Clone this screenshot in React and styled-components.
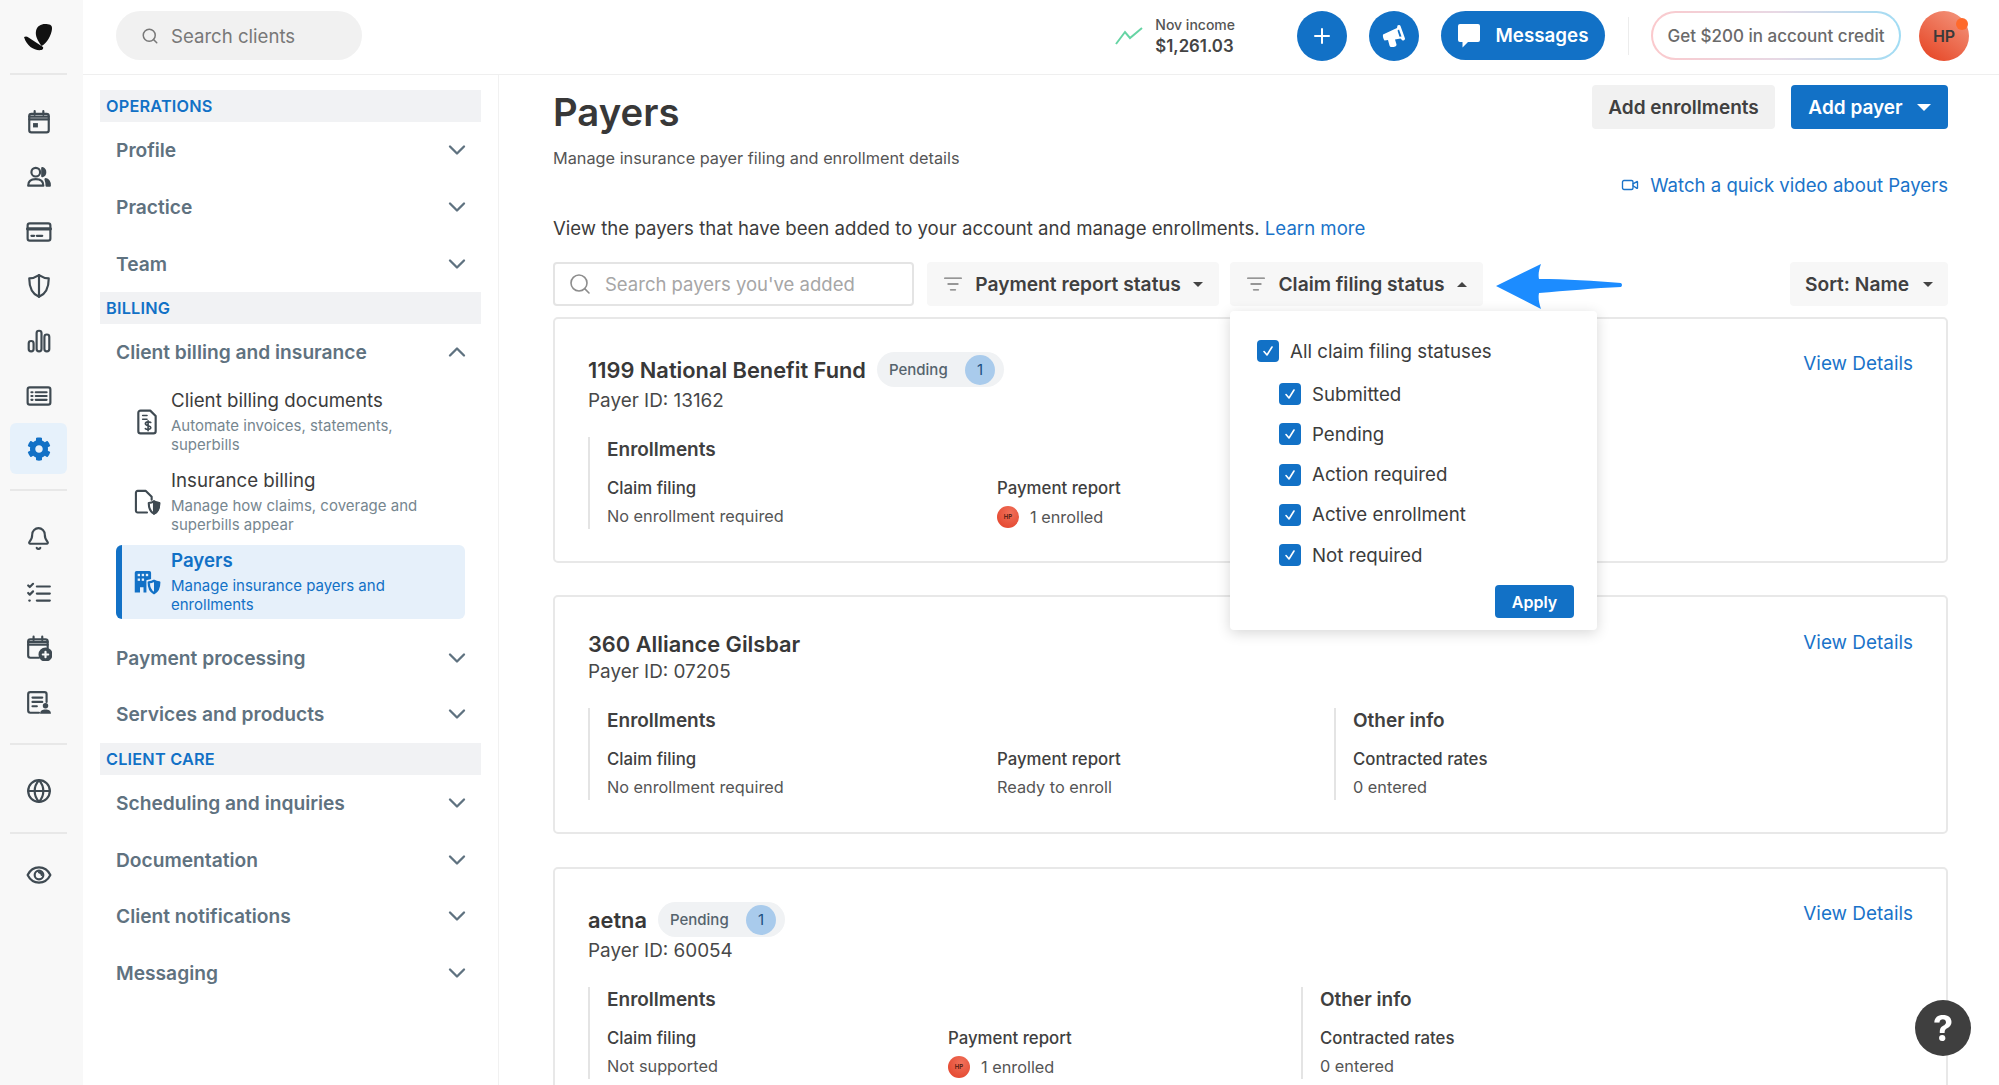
import React from "react";
import styled, { createGlobalStyle } from "styled-components";
import { ChevronDown, ChevronUp, Search, Plus, Globe, Bell, Video, ListFilter } from "lucide-react";
import { FaCog } from "react-icons/fa";

const GlobalStyle = createGlobalStyle`
  html, body {
    margin: 0;
    padding: 0;
    background: #fff;
    font-family: "Inter", "Liberation Sans", sans-serif;
    color: #3c3c3c;
  }
  * {
    box-sizing: border-box;
  }
`;

const BLUE = "#1271c6";

const Page = styled.div`
  display: flex;
  width: 100%;
  height: 100vh;
  overflow: hidden;
`;

const Rail = styled.nav`
  width: 83px;
  flex-shrink: 0;
  background: #f8f8f8;
  display: flex;
  flex-direction: column;
  align-items: flex-start;
  padding-left: 10px;
  color: #3f4a52;
`;

const LogoBox = styled.div`
  height: 75px;
  width: 57px;
  display: flex;
  align-items: center;
  justify-content: center;
  border-bottom: 2px solid #e8e8e8;
`;

const RailGroup = styled.div`
  display: flex;
  flex-direction: column;
  align-items: center;
  padding: ${(p) => p.$pad || "20px 0 15px"};
  width: 57px;
  border-bottom: ${(p) => (p.$last ? "none" : "2px solid #e8e8e8")};
`;

const RailIcon = styled.div`
  width: 57px;
  height: ${(p) => p.$h || 54.7}px;
  display: flex;
  align-items: center;
  justify-content: center;
  border-radius: 6px;
  background: ${(p) => (p.$active ? "#e6f1fb" : "transparent")};
  color: ${(p) => (p.$active ? BLUE : "inherit")};
`;

const Body = styled.div`
  flex: 1;
  min-width: 0;
  display: flex;
  flex-direction: column;
`;

const TopBar = styled.header`
  height: 75px;
  flex-shrink: 0;
  border-bottom: 1px solid #efefef;
  display: flex;
  align-items: center;
  padding: 0 30px 3px 33px;
`;

const ClientSearch = styled.div`
  width: 246px;
  height: 49px;
  border-radius: 25px;
  background: #f1f1f1;
  display: flex;
  align-items: center;
  padding-left: 25px;
  gap: 12px;
  font-size: 18.6px;
  color: #787878;
`;

const Income = styled.div`
  margin-left: auto;
  display: flex;
  align-items: center;
  gap: 12px;
  margin-right: 62px;
`;

const IncomeText = styled.div`
  display: flex;
  flex-direction: column;
  gap: 3px;
`;

const IncomeLabel = styled.span`
  font-size: 14px;
  font-weight: 500;
  color: #555;
`;

const IncomeValue = styled.span`
  font-size: 16.8px;
  font-weight: 600;
  color: #444;
`;

const RoundButton = styled.div`
  width: 50px;
  height: 50px;
  border-radius: 50%;
  background: ${BLUE};
  color: #fff;
  display: flex;
  align-items: center;
  justify-content: center;
  margin-right: 22px;
`;

const MessagesButton = styled.div`
  width: 164px;
  height: 49px;
  border-radius: 25px;
  background: ${BLUE};
  color: #fff;
  display: flex;
  align-items: center;
  justify-content: center;
  gap: 14px;
  font-size: 18.8px;
  font-weight: 600;
`;

const BarDivider = styled.div`
  width: 1px;
  height: 38px;
  background: #ececec;
  margin: 0 22px 0 23px;
`;

const CreditPill = styled.div`
  width: 250px;
  height: 49px;
  border-radius: 25px;
  border: 2px solid transparent;
  background: linear-gradient(#fff, #fff) padding-box,
    linear-gradient(90deg, #fbc9cc, #e8d8e4 50%, #a0dcf4) border-box;
  display: flex;
  align-items: center;
  justify-content: center;
  font-size: 17px;
  font-weight: 500;
  color: #6a6a6a;
`;

const Avatar = styled.div`
  position: relative;
  width: 50px;
  height: 50px;
  margin-left: 18px;
  border-radius: 50%;
  background: linear-gradient(215deg, #f49a82, #e5401f);
  display: flex;
  align-items: center;
  justify-content: center;
  font-size: 16px;
  font-weight: 600;
  color: #3a3a3a;
`;

const AvatarDot = styled.span`
  position: absolute;
  top: 7px;
  right: 1px;
  width: 12px;
  height: 12px;
  border-radius: 50%;
  background: #ff6a2b;
`;

const Columns = styled.div`
  flex: 1;
  min-height: 0;
  display: flex;
`;

const Sidebar = styled.aside`
  width: 416px;
  flex-shrink: 0;
  border-right: 1px solid #f1f1f1;
  padding: 15px 17px 0;
`;

const Band = styled.div`
  height: 32px;
  background: #f1f2f4;
  color: ${BLUE};
  font-size: 16.3px;
  font-weight: 600;
  letter-spacing: 0.2px;
  display: flex;
  align-items: center;
  padding-left: 6px;
`;

const NavRow = styled.div`
  height: 56.7px;
  display: flex;
  align-items: center;
  justify-content: space-between;
  padding: 0 10px 0 16px;
  font-size: 19.2px;
  font-weight: 600;
  color: #5f7280;
`;

const SubNav = styled.div`
  display: flex;
  flex-direction: column;
  gap: 6px;
  padding: 4px 16px 10.5px;
`;

const SubItem = styled.div`
  height: 74px;
  display: grid;
  grid-template-columns: 49px 1fr;
  align-items: center;
  padding-right: 14px;
  border-left: 6px solid ${(p) => (p.$active ? BLUE : "transparent")};
  border-radius: 6px;
  background: ${(p) => (p.$active ? "#e6f0fa" : "transparent")};
  color: ${(p) => (p.$active ? BLUE : "#3f4a52")};
`;

const SubIcon = styled.div`
  display: flex;
  justify-content: center;
`;

const SubTitle = styled.div`
  font-size: 18.7px;
  font-weight: ${(p) => (p.$active ? 600 : 400)};
  line-height: 24px;
  color: ${(p) => (p.$active ? BLUE : "#3c3c3c")};
`;

const SubText = styled.div`
  font-size: 15px;
  line-height: 18.5px;
  margin-top: 4px;
  color: ${(p) => (p.$active ? BLUE : "#76868f")};
`;

const Main = styled.main`
  flex: 1;
  min-width: 0;
  padding: 10px 51px 0 54px;
  overflow: hidden;
`;

const Header = styled.div`
  display: flex;
  justify-content: space-between;
  align-items: flex-start;
`;

const Title = styled.h1`
  margin: 0;
  font-size: 38.3px;
  line-height: 54px;
  font-weight: 600;
  color: #383838;
`;

const Subtitle = styled.div`
  margin-top: 9px;
  font-size: 16.3px;
  line-height: 20px;
  color: #555;
`;

const Actions = styled.div`
  display: flex;
  gap: 16px;
`;

const GreyButton = styled.div`
  height: 44px;
  width: 183px;
  border-radius: 4px;
  background: #f1f1f1;
  display: flex;
  align-items: center;
  justify-content: center;
  font-size: 19px;
  font-weight: 600;
  color: #404040;
`;

const BlueButton = styled.div`
  height: 44px;
  width: 157px;
  border-radius: 4px;
  background: ${BLUE};
  display: flex;
  align-items: center;
  justify-content: center;
  gap: 14px;
  font-size: 19px;
  font-weight: 600;
  color: #fff;
`;

const Caret = styled.span`
  width: 0;
  height: 0;
  border-left: ${(p) => p.$size || 5}px solid transparent;
  border-right: ${(p) => p.$size || 5}px solid transparent;
  border-top: ${(p) => (p.$up ? "0" : `${p.$size || 5}px solid ${p.$color || "#444"}`)};
  border-bottom: ${(p) => (p.$up ? `${p.$size || 5}px solid ${p.$color || "#444"}` : "0")};
`;

const VideoLink = styled.div`
  margin-top: 6px;
  display: flex;
  justify-content: flex-end;
  align-items: center;
  gap: 11px;
  font-size: 18.6px;
  line-height: 22px;
  color: #1a73c9;
`;

const Intro = styled.div`
  margin-top: 20px;
  font-size: 18.6px;
  line-height: 24px;
  color: #3c3c3c;
`;

const LearnMore = styled.span`
  color: #1a73c9;
`;

const FilterRow = styled.div`
  margin-top: 22px;
  height: 44px;
  display: flex;
  align-items: center;
`;

const PayerSearch = styled.div`
  width: 361px;
  height: 44px;
  border: 2px solid #e4e4e4;
  border-radius: 4px;
  display: flex;
  align-items: center;
  gap: 11px;
  padding-left: 13px;
  margin-right: 13px;
  color: #8d8d8d;
`;

const PayerInput = styled.input`
  border: 0;
  outline: 0;
  flex: 1;
  min-width: 0;
  font-family: inherit;
  font-size: 18.5px;
  background: transparent;
  &::placeholder {
    color: #a6a6a6;
  }
`;

const FilterWrap = styled.div`
  position: relative;
  margin-right: ${(p) => p.$mr || 0}px;
`;

const FilterButton = styled.div`
  height: 44px;
  width: ${(p) => p.$w}px;
  background: #f7f7f7;
  border-radius: 4px;
  display: flex;
  align-items: center;
  justify-content: center;
  gap: ${(p) => p.$gap || 12}px;
  font-size: 19.2px;
  font-weight: 600;
  color: #404040;
`;

const Dropdown = styled.div`
  position: absolute;
  z-index: 5;
  top: calc(100% + 5px);
  left: 0;
  width: 367px;
  height: 319px;
  background: #fff;
  border-radius: 4px;
  box-shadow: 0 3px 14px rgba(0, 0, 0, 0.16);
  padding: 26px 23px 0 27px;
`;

const CheckRow = styled.div`
  display: flex;
  align-items: center;
  gap: 11px;
  height: 28px;
  margin-left: ${(p) => (p.$nested ? 22 : 0)}px;
  margin-bottom: ${(p) => p.$mb || 12.3}px;
  font-size: 18.7px;
  color: #3c3c3c;
`;

const CheckBox = styled.span`
  width: 22px;
  height: 22px;
  border-radius: 4px;
  background: ${BLUE};
  display: flex;
  align-items: center;
  justify-content: center;
  flex-shrink: 0;
`;

const ApplyRow = styled.div`
  display: flex;
  justify-content: flex-end;
  margin-top: 16px;
`;

const ApplyButton = styled.div`
  width: 79px;
  height: 33px;
  border-radius: 4px;
  background: ${BLUE};
  color: #fff;
  font-size: 16px;
  font-weight: 600;
  display: flex;
  align-items: center;
  justify-content: center;
`;

const ArrowMark = styled.svg`
  margin: 3px 0 0 12px;
  flex-shrink: 0;
`;

const SortWrap = styled.div`
  margin-left: auto;
`;

const Card = styled.section`
  position: relative;
  margin-top: ${(p) => p.$mt}px;
  height: ${(p) => p.$h}px;
  border: 2px solid #e8e8e8;
  border-radius: 5px;
  padding: 33px 0 0 33px;
`;

const NameRow = styled.div`
  display: flex;
  align-items: center;
  gap: 11px;
  min-height: ${(p) => (p.$pill ? 35 : 28)}px;
`;

const PayerName = styled.div`
  font-size: 21.8px;
  font-weight: 600;
  color: #383838;
`;

const StatusPill = styled.div`
  height: 35px;
  width: ${(p) => p.$w}px;
  border-radius: 18px;
  background: #f0f2f4;
  display: flex;
  align-items: center;
  justify-content: space-between;
  padding: 0 9px 0 12px;
  font-size: 15px;
  font-weight: 500;
  color: #55636d;
`;

const StatusCount = styled.span`
  width: 30px;
  height: 30px;
  border-radius: 50%;
  background: #a9cbec;
  color: #1d4f80;
  font-weight: 400;
  display: flex;
  align-items: center;
  justify-content: center;
`;

const PayerId = styled.div`
  margin-top: 2px;
  font-size: 18.9px;
  line-height: 24px;
  color: #484848;
`;

const ViewDetails = styled.div`
  position: absolute;
  top: ${(p) => p.$top}px;
  right: 33px;
  font-size: 18.9px;
  line-height: 24px;
  color: #1a73c9;
`;

const InfoRow = styled.div`
  margin-top: 24px;
  display: flex;
`;

const InfoSection = styled.div`
  width: ${(p) => (p.$w ? `${p.$w}px` : "auto")};
  height: 92px;
  border-left: 2px solid #e4e4e4;
  padding-left: 17px;
`;

const InfoHeading = styled.div`
  font-size: 19px;
  line-height: 26px;
  font-weight: 600;
  color: #404040;
  margin-bottom: 15px;
`;

const InfoFields = styled.div`
  display: flex;
`;

const InfoField = styled.div`
  width: ${(p) => (p.$w ? `${p.$w}px` : "auto")};
`;

const FieldLabel = styled.div`
  font-size: 16.8px;
  line-height: 20px;
  font-weight: 500;
  color: #404040;
`;

const FieldValue = styled.div`
  margin-top: 8px;
  display: flex;
  align-items: center;
  gap: 11px;
  font-size: 16.3px;
  line-height: 20px;
  color: #555;
`;

const MiniAvatar = styled.span`
  width: 22px;
  height: 22px;
  border-radius: 50%;
  background: radial-gradient(circle at 60% 30%, #f0705a, #e23f26);
  color: #4a1a10;
  font-size: 6px;
  font-weight: 600;
  display: flex;
  align-items: center;
  justify-content: center;
`;

const HelpButton = styled.div`
  position: fixed;
  right: 28px;
  bottom: 29px;
  width: 56px;
  height: 56px;
  border-radius: 50%;
  background: #3f3f3f;
  color: #fff;
  font-size: 36px;
  font-weight: 700;
  display: flex;
  align-items: center;
  justify-content: center;
`;

// rail + sidebar drawings, all on a 24 grid
const Ico = ({ children, size = 26, sw = 2, fill = "none" }) => (
  <svg width={size} height={size} viewBox="0 0 24 24" fill={fill} stroke="currentColor" strokeWidth={sw} strokeLinecap="round" strokeLinejoin="round">
    {children}
  </svg>
);

const Logo = () => (
  <svg width="29" height="28" viewBox="0 0 29 28" fill="#111">
    <path d="M17.600 23C14 18 11 13 12 8C13 3 17 1 21 1C25 1 28.500 1.500 28 6C27.500 12 23 20 17.600 23Z" />
    <path d="M0 14C2 13 3 13.500 4.500 14.500L19 24C19.500 25 19 26.500 17.500 27C11 28 3 24 0 14Z" />
  </svg>
);

const CalendarIcon = () => (
  <Ico>
    <rect x="3" y="4.500" width="18" height="17" rx="2" />
    <path d="M3 9.500h18M3 7h18M8 2v3M16 2v3" />
    <rect x="6.500" y="13" width="4.500" height="4" fill="currentColor" stroke="none" />
  </Ico>
);

const PeopleIcon = () => (
  <Ico>
    <circle cx="9" cy="7.500" r="4" />
    <path d="M2 20c0-4 3-6 7-6s7 2 7 6z" />
    <path d="M15 3.700a4 4 0 0 1 0 7.600z" fill="currentColor" />
    <path d="M18 14c2.500.5 4 2.500 4 6h-3c0-2.500-.5-4.500-1-6z" fill="currentColor" />
  </Ico>
);

const CardIcon = () => (
  <Ico>
    <rect x="1.500" y="4" width="21" height="16" rx="2" />
    <path d="M1.500 9h21" strokeWidth="3" />
    <path d="M5 15.500h2.500M10 15.500h5" />
  </Ico>
);

const ShieldIcon = () => (
  <Ico>
    <path d="M12 2c3 2 6 3 9 3 0 8-2 14-9 17C5 19 3 13 3 5c3 0 6-1 9-3z" />
    <path d="M12 2v20" />
  </Ico>
);

const BarsIcon = () => (
  <Ico>
    <rect x="2.500" y="12" width="4.500" height="9.500" rx="2.200" />
    <rect x="9.800" y="2.500" width="4.500" height="19" rx="2.200" />
    <rect x="17" y="6" width="4.500" height="15.500" rx="2.200" />
  </Ico>
);

const ListIcon = () => (
  <Ico>
    <rect x="1.500" y="4" width="21" height="16" rx="2" />
    <path d="M5 8.500h1M5 12h1M5 15.500h1M9 8.500h10M9 12h10M9 15.500h10" />
  </Ico>
);

const TasksIcon = () => (
  <Ico>
    <path d="M2 5l1.500 1.500L6.500 3.500M2 12l1.500 1.500L6.500 10.500M3 19h.5M10 6h12M10 12.500h12M10 19h12" />
  </Ico>
);

const CalendarPlusIcon = () => (
  <Ico>
    <path d="M12 21H4a2 2 0 0 1-2-2V6a2 2 0 0 1 2-2h14a2 2 0 0 1 2 2v6" />
    <path d="M2 9h18M2 6.500h18M7 1.500v3M15 1.500v3" />
    <circle cx="18" cy="18" r="5.500" fill="currentColor" />
    <path d="M18 15.500v5M15.500 18h5" stroke="#f8f8f8" />
  </Ico>
);

const ReportIcon = () => (
  <Ico>
    <path d="M12 21H4a2 2 0 0 1-2-2V4a2 2 0 0 1 2-2h13a2 2 0 0 1 2 2v7" />
    <path d="M6 7h9M6 11h9M6 15h4" />
    <circle cx="18" cy="14.500" r="2.500" fill="currentColor" stroke="none" />
    <path d="M13 22c0-3 2-4 5-4s5 1 5 4z" fill="currentColor" stroke="none" />
  </Ico>
);

const EyeIcon = () => (
  <Ico>
    <path d="M1.500 12C4 7 8 5 12 5s8 2 10.500 7C20 17 16 19 12 19s-8-2-10.500-7z" />
    <circle cx="12" cy="12" r="4" />
    <path d="M12 9.500a2.500 2.500 0 0 1 2.500 2.500" />
  </Ico>
);

const DocDollarIcon = () => (
  <svg width="26" height="28" viewBox="0 0 24 24" fill="none" stroke="currentColor" strokeWidth="2" strokeLinecap="round" strokeLinejoin="round">
    <path d="M6 1.500h9l5 5v14a2 2 0 0 1-2 2H6a2 2 0 0 1-2-2v-17a2 2 0 0 1 2-2z" />
    <path d="M8 6h4M8 9.500h4" strokeWidth="1.500" />
    <path d="M15.500 12.500c-1-1-5-1-5 1.200s5 1.300 5 3.400-4 2-5 1M13 11v9" strokeWidth="1.500" />
  </svg>
);

const DocShieldIcon = () => (
  <Ico size={28} sw={1.800}>
    <path d="M12 21H4a1.500 1.500 0 0 1-1.500-1.500V4A1.500 1.500 0 0 1 4 2.500h7l5 5V10" />
    <path d="M18 11.500c1.500 1 3 1.300 4.500 1.300 0 4.500-1.300 7.700-4.500 9.200-3.200-1.500-4.500-4.700-4.500-9.200 1.500 0 3-.3 4.500-1.300z" />
    <path d="M18 11.500V22h0c3.200-1.500 4.500-4.700 4.500-9.200-1.500 0-3-.3-4.500-1.300z" fill="currentColor" />
  </Ico>
);

const BuildingShieldIcon = () => (
  <svg width="28" height="28" viewBox="0 0 24 24">
    <path fill="currentColor" d="M3 2.500h11A1.500 1.500 0 0 1 15.500 4v5.500c-2 .6-3.500 1-4 1V21H9v-4.500H6V21H1.500V4A1.500 1.500 0 0 1 3 2.500z" />
    <g fill="#e6f0fa">
      <rect x="4" y="5" width="2" height="2" />
      <rect x="7.500" y="5" width="2" height="2" />
      <rect x="11" y="5" width="2" height="2" />
      <rect x="4" y="9" width="2" height="2" />
      <rect x="7.500" y="9" width="2" height="2" />
    </g>
    <path fill="none" stroke="currentColor" strokeWidth="2" strokeLinejoin="round" d="M18 11c1.500 1 3 1.300 4.500 1.300 0 4.500-1.300 7.700-4.500 9.200-3.200-1.500-4.500-4.700-4.500-9.200 1.500 0 3-.3 4.500-1.300z" />
    <path fill="currentColor" d="M18 11v10.500c3.200-1.500 4.500-4.700 4.500-9.200-1.500 0-3-.3-4.500-1.300z" />
  </svg>
);

const HornIcon = () => (
  <svg width="24" height="24" viewBox="0 0 24 24" fill="#fff" fillRule="evenodd">
    <path d="M1 10.500L15 4L15.500 1.500C16.500 .5 18 1 18.500 2L23 14.500C23 16 22 16.500 20.500 16.500L18.500 14.500L13 15.500L14.500 20.500C14.500 22 13.500 22.500 12 23L9.500 23C8.500 23 8 22.500 7.500 21.500L6 16L2.500 16.500C1.500 15 .5 12.500 1 10.500ZM17 5.500L19.500 12.500L17.500 12.800L15.500 6.500Z" />
  </svg>
);

const BubbleIcon = () => (
  <svg width="24" height="25" viewBox="0 0 24 25" fill="#fff">
    <path d="M3 1h18a2 2 0 0 1 2 2v14a2 2 0 0 1-2 2H11l-5.500 5.500L5.500 19H3a2 2 0 0 1-2-2V3a2 2 0 0 1 2-2z" />
  </svg>
);

const TrendIcon = () => (
  <svg width="28" height="18" viewBox="0 0 28 18" fill="none" stroke="#66d4a4" strokeWidth="2">
    <path d="M1 17L10 5L15 11L27 1" />
  </svg>
);

const TickIcon = () => (
  <svg width="14" height="14" viewBox="0 0 14 14" fill="none" stroke="#fff" strokeWidth="1.600" strokeLinecap="round" strokeLinejoin="round">
    <path d="M3 7.500L6 11L11 3" />
  </svg>
);

const Chevron = () => <ChevronDown size={28} strokeWidth={2} />;

const operations = ["Profile", "Practice", "Team"];
const billingAfter = ["Payment processing", "Services and products"];
const clientCare = ["Scheduling and inquiries", "Documentation", "Client notifications", "Messaging"];
const claimStatuses = ["Submitted", "Pending", "Action required", "Active enrollment", "Not required"];

function NavItem({ label, open }) {
  return (
    <NavRow>
      {label}
      {open ? <ChevronUp size={28} strokeWidth={2} /> : <Chevron />}
    </NavRow>
  );
}

function Payer({ name, id, pillWidth, detailsTop, mt, h, enrollWidth, claim, reportWidth, report, enrolled, other }) {
  return (
    <Card $mt={mt} $h={h}>
      <NameRow $pill={!!pillWidth}>
        <PayerName>{name}</PayerName>
        {pillWidth && (
          <StatusPill $w={pillWidth}>
            Pending
            <StatusCount>1</StatusCount>
          </StatusPill>
        )}
      </NameRow>
      <PayerId>Payer ID: {id}</PayerId>
      <ViewDetails $top={detailsTop}>View Details</ViewDetails>
      <InfoRow>
        <InfoSection $w={enrollWidth}>
          <InfoHeading>Enrollments</InfoHeading>
          <InfoFields>
            <InfoField $w={reportWidth}>
              <FieldLabel>Claim filing</FieldLabel>
              <FieldValue>{claim}</FieldValue>
            </InfoField>
            <InfoField>
              <FieldLabel>Payment report</FieldLabel>
              <FieldValue>
                {enrolled && <MiniAvatar>HP</MiniAvatar>}
                {report}
              </FieldValue>
            </InfoField>
          </InfoFields>
        </InfoSection>
        {other && (
          <InfoSection>
            <InfoHeading>Other info</InfoHeading>
            <FieldLabel>Contracted rates</FieldLabel>
            <FieldValue>0 entered</FieldValue>
          </InfoSection>
        )}
      </InfoRow>
    </Card>
  );
}

export default function App() {
  return (
    <Page>
      <GlobalStyle />
      <Rail>
        <LogoBox>
          <Logo />
        </LogoBox>
        <RailGroup>
          <RailIcon><CalendarIcon /></RailIcon>
          <RailIcon><PeopleIcon /></RailIcon>
          <RailIcon><CardIcon /></RailIcon>
          <RailIcon><ShieldIcon /></RailIcon>
          <RailIcon><BarsIcon /></RailIcon>
          <RailIcon><ListIcon /></RailIcon>
          <RailIcon $active $h={51}><FaCog size={24} /></RailIcon>
        </RailGroup>
        <RailGroup $pad="20px 0 13px">
          <RailIcon><Bell size={25} strokeWidth={2} /></RailIcon>
          <RailIcon><TasksIcon /></RailIcon>
          <RailIcon><CalendarPlusIcon /></RailIcon>
          <RailIcon><ReportIcon /></RailIcon>
        </RailGroup>
        <RailGroup $pad="20px 0 15px">
          <RailIcon $h={52}><Globe size={26} strokeWidth={2} /></RailIcon>
        </RailGroup>
        <RailGroup $pad="15px 0" $last>
          <RailIcon $h={52}><EyeIcon /></RailIcon>
        </RailGroup>
      </Rail>

      <Body>
        <TopBar>
          <ClientSearch>
            <Search size={18} strokeWidth={2} />
            Search clients
          </ClientSearch>
          <Income>
            <TrendIcon />
            <IncomeText>
              <IncomeLabel>Nov income</IncomeLabel>
              <IncomeValue>$1,261.03</IncomeValue>
            </IncomeText>
          </Income>
          <RoundButton><Plus size={24} strokeWidth={2} /></RoundButton>
          <RoundButton><HornIcon /></RoundButton>
          <MessagesButton>
            <BubbleIcon />
            Messages
          </MessagesButton>
          <BarDivider />
          <CreditPill>Get $200 in account credit</CreditPill>
          <Avatar>
            HP
            <AvatarDot />
          </Avatar>
        </TopBar>

        <Columns>
          <Sidebar>
            <Band>OPERATIONS</Band>
            {operations.map((label) => (
              <NavItem key={label} label={label} />
            ))}
            <Band>BILLING</Band>
            <NavItem label="Client billing and insurance" open />
            <SubNav>
              <SubItem>
                <SubIcon><DocDollarIcon /></SubIcon>
                <div>
                  <SubTitle>Client billing documents</SubTitle>
                  <SubText>Automate invoices, statements, superbills</SubText>
                </div>
              </SubItem>
              <SubItem>
                <SubIcon><DocShieldIcon /></SubIcon>
                <div>
                  <SubTitle>Insurance billing</SubTitle>
                  <SubText>Manage how claims, coverage and superbills appear</SubText>
                </div>
              </SubItem>
              <SubItem $active>
                <SubIcon><BuildingShieldIcon /></SubIcon>
                <div>
                  <SubTitle $active>Payers</SubTitle>
                  <SubText $active>Manage insurance payers and enrollments</SubText>
                </div>
              </SubItem>
            </SubNav>
            {billingAfter.map((label) => (
              <NavItem key={label} label={label} />
            ))}
            <Band>CLIENT CARE</Band>
            {clientCare.map((label) => (
              <NavItem key={label} label={label} />
            ))}
          </Sidebar>

          <Main>
            <Header>
              <div>
                <Title>Payers</Title>
                <Subtitle>Manage insurance payer filing and enrollment details</Subtitle>
              </div>
              <Actions>
                <GreyButton>Add enrollments</GreyButton>
                <BlueButton>
                  Add payer
                  <Caret $size={7} $color="#fff" />
                </BlueButton>
              </Actions>
            </Header>
            <VideoLink>
              <Video size={18} strokeWidth={1.8} />
              Watch a quick video about Payers
            </VideoLink>
            <Intro>
              View the payers that have been added to your account and manage enrollments. <LearnMore>Learn more</LearnMore>
            </Intro>

            <FilterRow>
              <PayerSearch>
                <Search size={24} strokeWidth={1.600} />
                <PayerInput placeholder="Search payers you've added" />
              </PayerSearch>
              <FilterWrap $mr={11}>
                <FilterButton $w={292}>
                  <ListFilter size={20} strokeWidth={1.600} color="#777" />
                  Payment report status
                  <Caret />
                </FilterButton>
              </FilterWrap>
              <FilterWrap>
                <FilterButton $w={253}>
                  <ListFilter size={20} strokeWidth={1.600} color="#777" />
                  Claim filing status
                  <Caret $up />
                </FilterButton>
                <Dropdown>
                  <CheckRow $mb={15}>
                    <CheckBox><TickIcon /></CheckBox>
                    All claim filing statuses
                  </CheckRow>
                  {claimStatuses.map((label) => (
                    <CheckRow key={label} $nested>
                      <CheckBox><TickIcon /></CheckBox>
                      {label}
                    </CheckRow>
                  ))}
                  <ApplyRow>
                    <ApplyButton>Apply</ApplyButton>
                  </ApplyRow>
                </Dropdown>
              </FilterWrap>
              <ArrowMark width="128" height="48" viewBox="0 0 128 48">
                <path fill="#1c8cff" d="M1 24L46 2C44 8 43 12 44 17C70 17 100 19 126 21Q128 23 126 25C100 26 70 29 44 31C43 36 44 41 46 47Z" />
              </ArrowMark>
              <SortWrap>
                <FilterButton $w={158} $gap={14}>
                  Sort: Name
                  <Caret />
                </FilterButton>
              </SortWrap>
            </FilterRow>

            <Payer
              mt={11}
              h={246}
              name="1199 National Benefit Fund"
              id="13162"
              pillWidth={127}
              detailsTop={33}
              claim="No enrollment required"
              reportWidth={390}
              report="1 enrolled"
              enrolled
            />
            <Payer
              mt={32}
              h={239}
              name="360 Alliance Gilsbar"
              id="07205"
              detailsTop={34}
              enrollWidth={746}
              claim="No enrollment required"
              reportWidth={390}
              report="Ready to enroll"
              other
            />
            <Payer
              mt={33}
              h={300}
              name="aetna"
              id="60054"
              pillWidth={127}
              detailsTop={33}
              enrollWidth={713}
              claim="Not supported"
              reportWidth={341}
              report="1 enrolled"
              enrolled
              other
            />
          </Main>
        </Columns>
      </Body>
      <HelpButton>?</HelpButton>
    </Page>
  );
}
